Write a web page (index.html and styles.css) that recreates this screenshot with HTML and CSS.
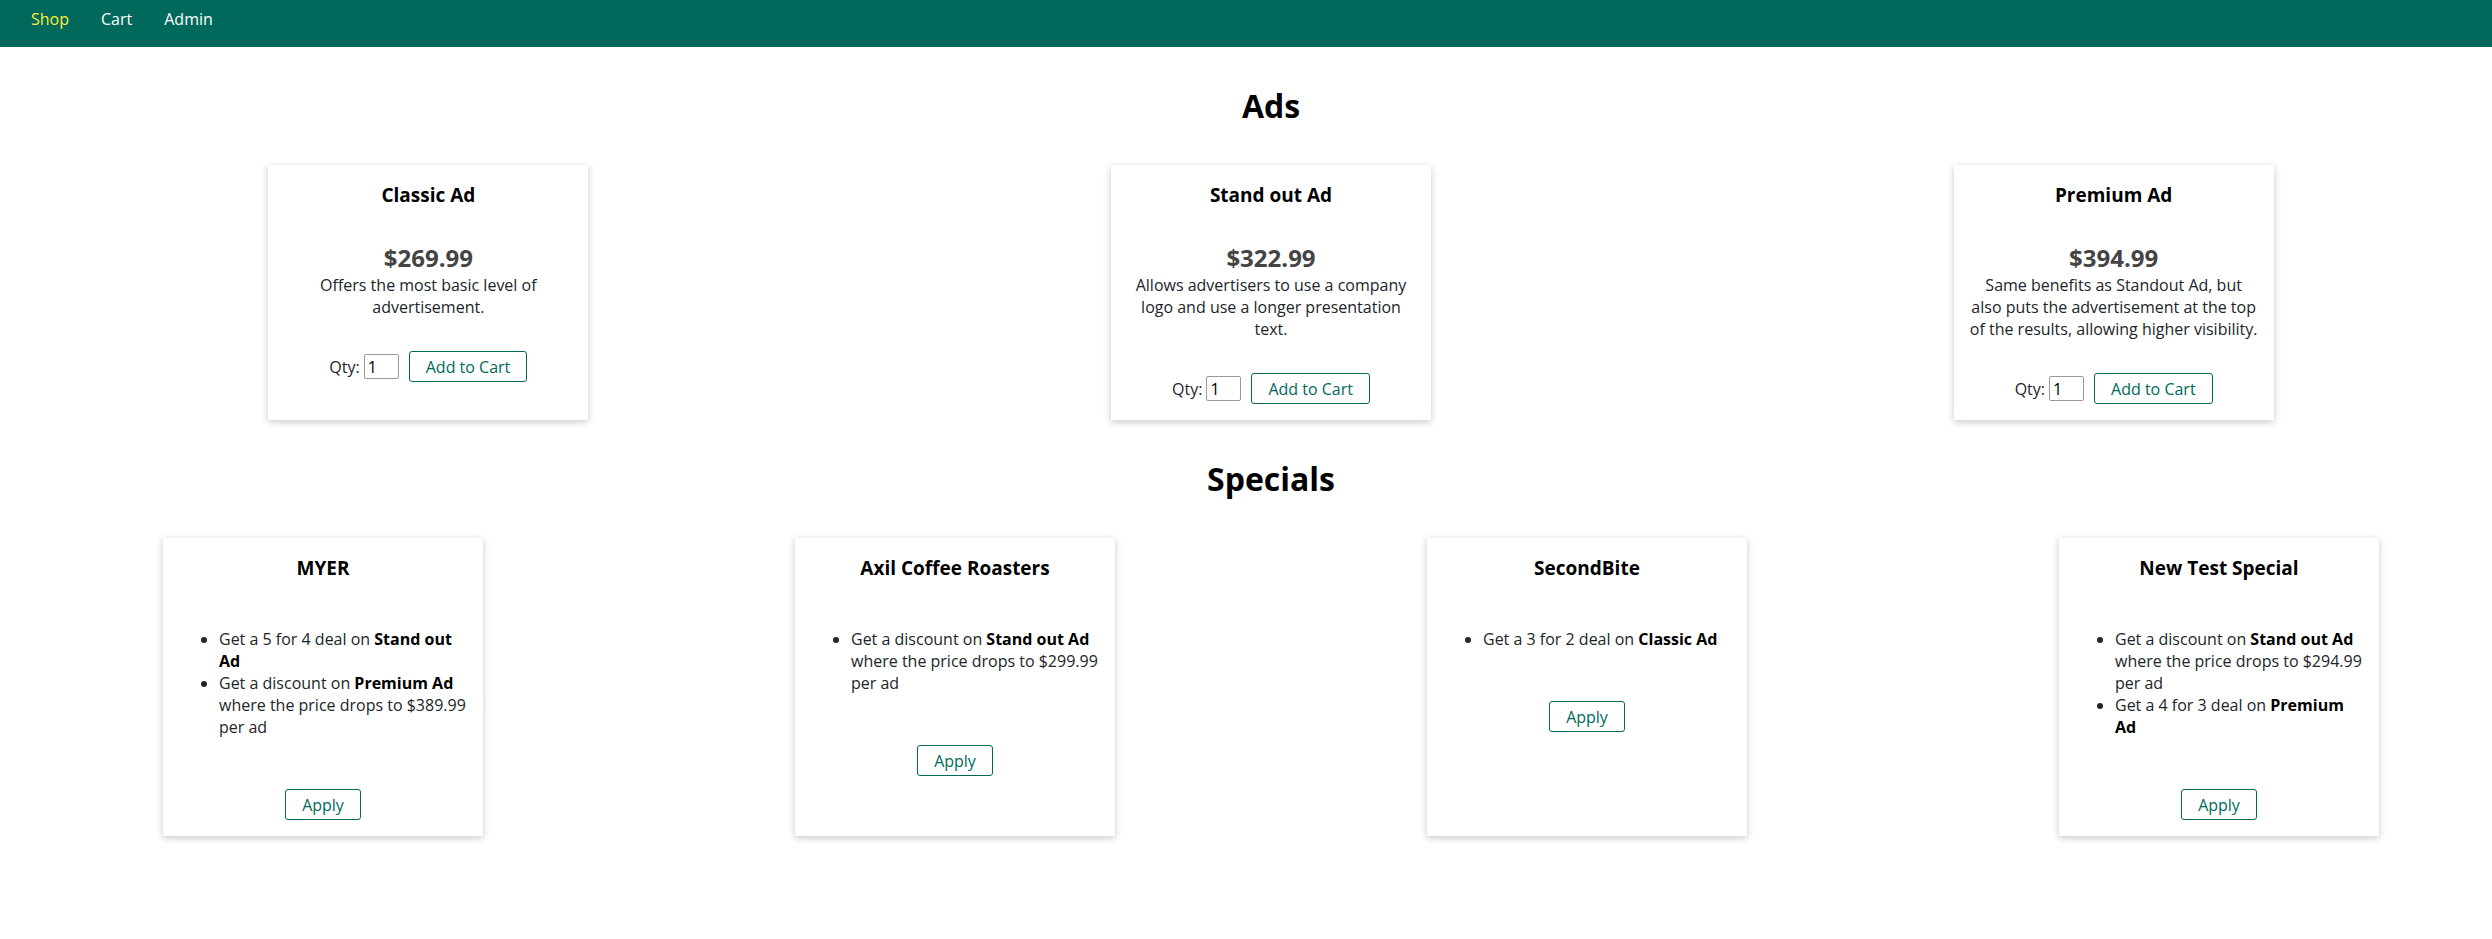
FILE: index.html
```html
<!DOCTYPE html>
<html lang="en">
<head>
<meta charset="utf-8">
<title>Shop</title>
<link rel="stylesheet" href="styles.css">
</head>
<body>
<nav class="topnav">
  <a class="nav-link active" href="#">Shop</a>
  <a class="nav-link" href="#">Cart</a>
  <a class="nav-link" href="#">Admin</a>
</nav>
<main class="page">
  <h1 class="section-title">Ads</h1>
  <div class="card-row">
    <div class="card">
      <h3 class="card-title">Classic Ad</h3>
      <div class="price">$269.99</div>
      <p class="desc">Offers the most basic level of advertisement.</p>
      <div class="action-row">
        <label class="qty-label">Qty:</label><input class="qty-input" type="text" value="1"><button class="btn-outline">Add to Cart</button>
      </div>
    </div>
    <div class="card">
      <h3 class="card-title">Stand out Ad</h3>
      <div class="price">$322.99</div>
      <p class="desc">Allows advertisers to use a company logo and use a longer presentation text.</p>
      <div class="action-row">
        <label class="qty-label">Qty:</label><input class="qty-input" type="text" value="1"><button class="btn-outline">Add to Cart</button>
      </div>
    </div>
    <div class="card">
      <h3 class="card-title">Premium Ad</h3>
      <div class="price">$394.99</div>
      <p class="desc">Same benefits as Standout Ad, but also puts the advertisement at the top of the results, allowing higher visibility.</p>
      <div class="action-row">
        <label class="qty-label">Qty:</label><input class="qty-input" type="text" value="1"><button class="btn-outline">Add to Cart</button>
      </div>
    </div>
  </div>

  <h1 class="section-title">Specials</h1>
  <div class="card-row">
    <div class="card">
      <h3 class="card-title">MYER</h3>
      <ul class="offers">
        <li>Get a 5 for 4 deal on <b>Stand out Ad</b></li>
        <li>Get a discount on <b>Premium Ad</b> where the price drops to $389.99 per ad</li>
      </ul>
      <div class="action-row"><button class="btn-outline">Apply</button></div>
    </div>
    <div class="card">
      <h3 class="card-title">Axil Coffee Roasters</h3>
      <ul class="offers">
        <li>Get a discount on <b>Stand out Ad</b> where the price drops to $299.99 per ad</li>
      </ul>
      <div class="action-row"><button class="btn-outline">Apply</button></div>
    </div>
    <div class="card">
      <h3 class="card-title">SecondBite</h3>
      <ul class="offers">
        <li>Get a 3 for 2 deal on <b>Classic Ad</b></li>
      </ul>
      <div class="action-row"><button class="btn-outline">Apply</button></div>
    </div>
    <div class="card">
      <h3 class="card-title">New Test Special</h3>
      <ul class="offers">
        <li>Get a discount on <b>Stand out Ad</b> where the price drops to $294.99 per ad</li>
        <li>Get a 4 for 3 deal on <b>Premium Ad</b></li>
      </ul>
      <div class="action-row"><button class="btn-outline">Apply</button></div>
    </div>
  </div>
</main>
</body>
</html>
```
FILE: styles.css
```css
html {
  overflow-x: hidden;
}

body {
  margin: 0;
  padding: 0;
  font-family: "Open Sans", "Noto Sans", sans-serif;
  font-size: 16px;
  line-height: normal;
  color: #212529;
  background: #fff;
}

.topnav {
  display: flex;
  height: 47px;
  box-sizing: border-box;
  padding: 8px 0 0 15px;
  background: #00695c;
}

.nav-link {
  padding: 0 16px;
  color: #fff;
  text-decoration: none;
  font-size: 16px;
  line-height: normal;
}

.nav-link.active {
  color: #ffeb3b;
}

.page {
  margin-left: 7px;
  width: 2528px;
  padding-bottom: 40px;
}

.section-title {
  margin: 37px 0 38px;
  font-size: 32px;
  font-weight: 700;
  line-height: normal;
  text-align: center;
  color: #000;
}

.card-row {
  display: flex;
  justify-content: space-around;
  align-items: stretch;
}

.card {
  display: flex;
  flex-direction: column;
  width: 320px;
  box-sizing: border-box;
  padding: 16px;
  background: #fff;
  box-shadow: 0 2px 7px rgba(0, 0, 0, 0.22);
  text-align: center;
}

.card-title {
  margin: 0 0 33px;
  padding-top: 1px;
  font-size: 19px;
  font-weight: 700;
  line-height: normal;
  color: #000;
}

.price {
  font-size: 24px;
  font-weight: 700;
  line-height: normal;
  color: #444;
}

.desc {
  margin: 0;
  line-height: normal;
}

.action-row {
  display: flex;
  justify-content: center;
  align-items: center;
  margin-top: 33px;
}

.qty-label {
  margin-right: 4px;
}

.qty-input {
  width: 35px;
  height: 25px;
  box-sizing: border-box;
  margin: 0 10px 0 0;
  padding: 0 3px;
  border: 1px solid #999;
  border-radius: 2px;
  font-family: "Open Sans", sans-serif;
  font-size: 16px;
  color: #000;
}

.btn-outline {
  padding: 3.5px 16px;
  border: 1px solid #00695c;
  border-radius: 3px;
  background: #fff;
  color: #00695c;
  font-family: "Open Sans", sans-serif;
  font-size: 16px;
  line-height: normal;
}

.offers {
  margin: 14px 0 18px;
  padding-left: 40px;
  text-align: left;
  line-height: normal;
}

.offers b {
  font-weight: 700;
  color: #000;
}
```
